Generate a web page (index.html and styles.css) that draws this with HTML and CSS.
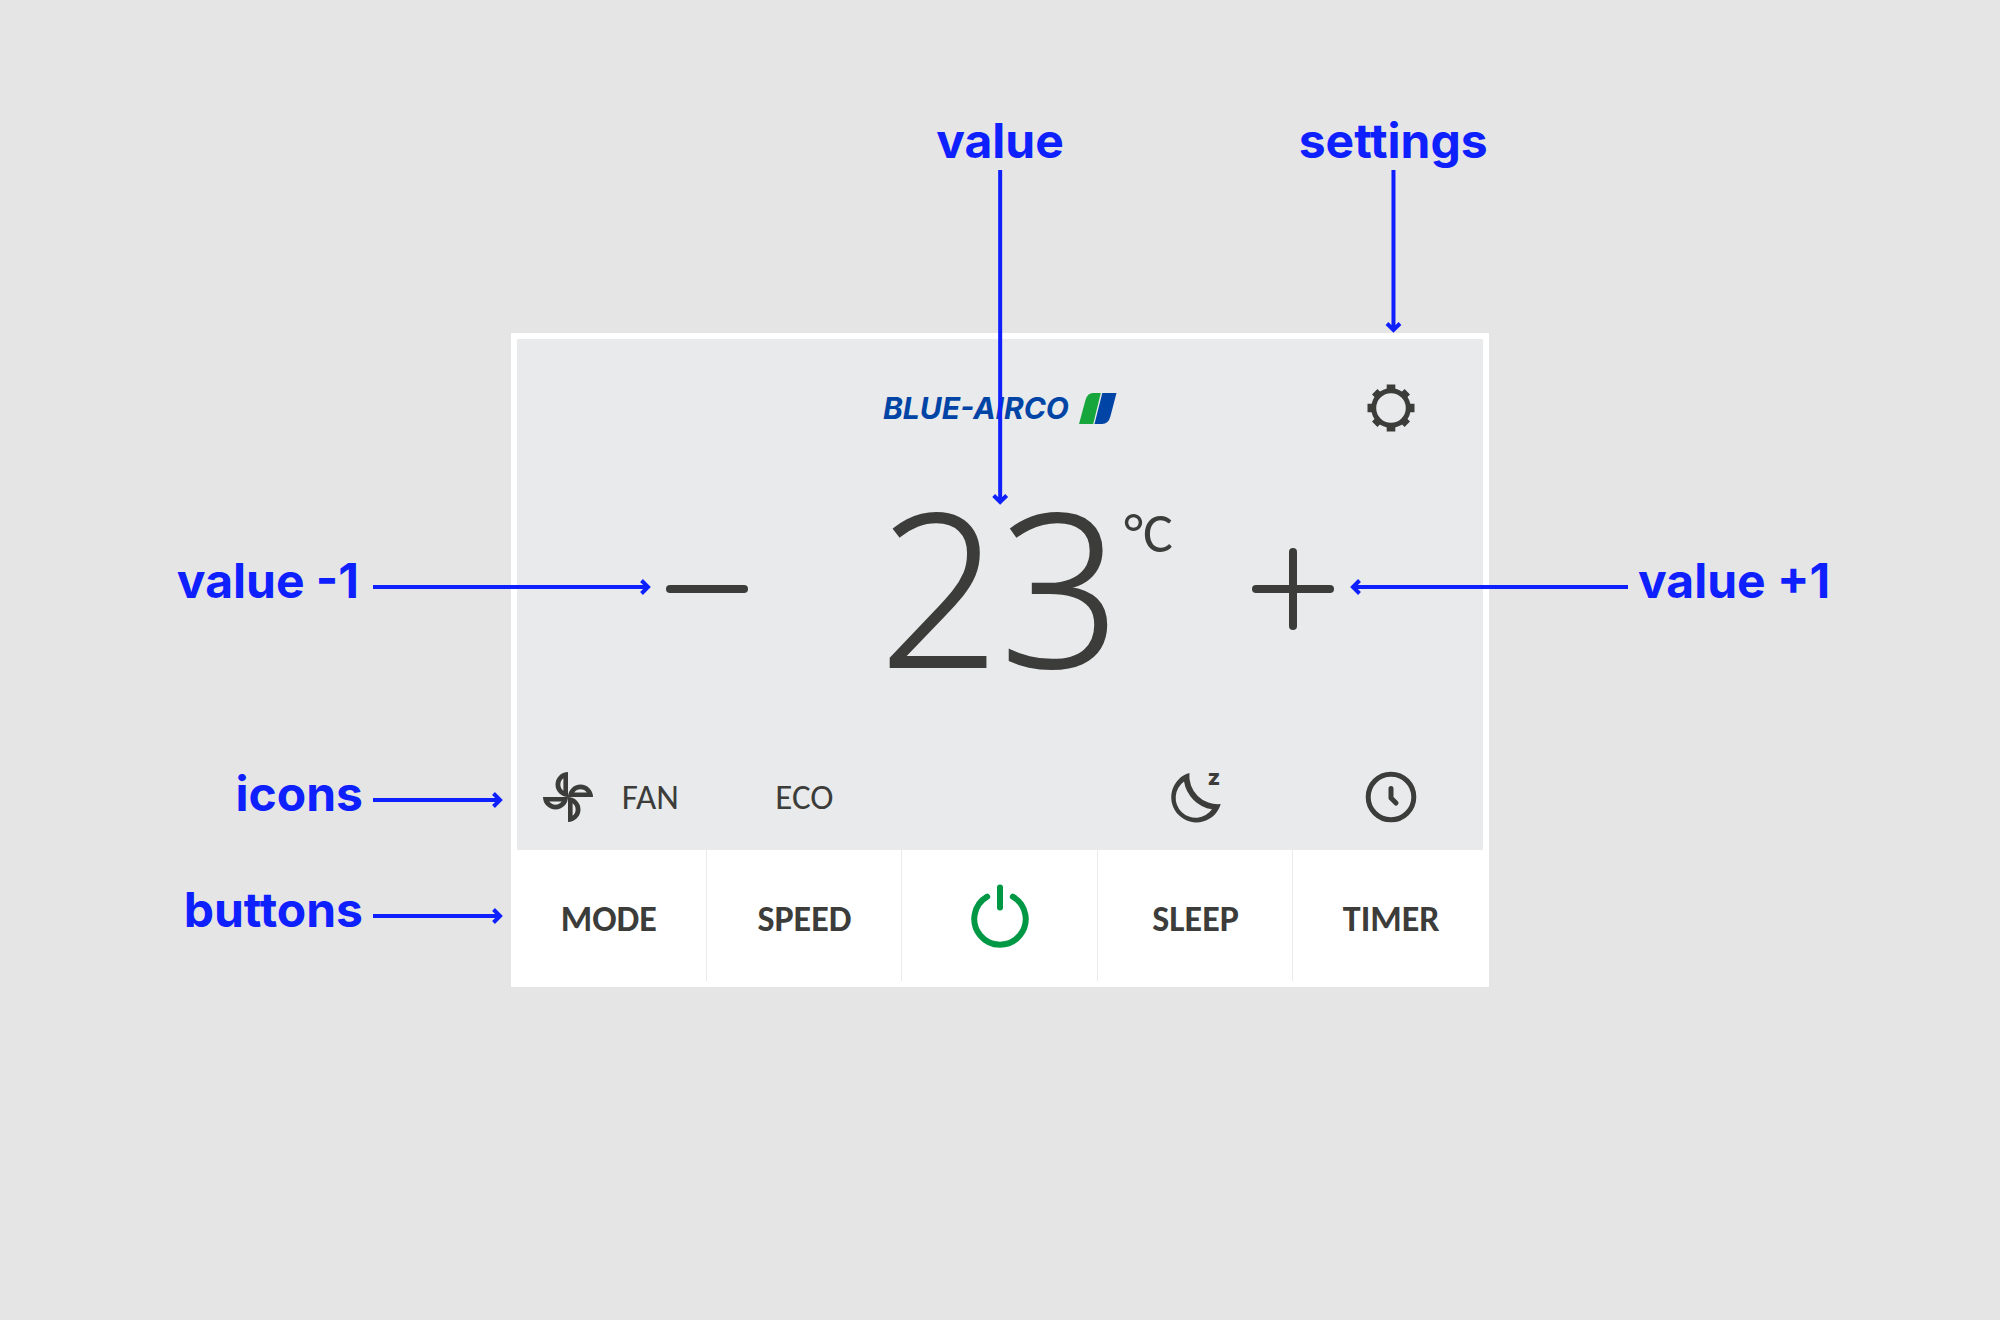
FILE: index.html
```html
<!DOCTYPE html>
<html lang="en">
<head>
<meta charset="UTF-8" />
<meta name="viewport" content="width=device-width, initial-scale=1" />
<title>Blue-Airco Thermostat</title>
<link rel="stylesheet" href="styles.css">
</head>
<body>
  <main class="stage">
    <section class="panel" aria-label="Air conditioner control">
      <div class="screen">
        <header class="top-row">
          <div class="logo">
            <span class="logo-text">BLUE-AIRCO</span>
            <svg class="logo-mark" width="38" height="31" viewBox="0 0 38 31" aria-hidden="true">
              <path fill="#16a63c" d="M0 31L6.5 7Q8.5 0 14 0H21.8L14.2 31Z"/>
              <path fill="#0044a6" d="M23.3 0H37.5L31.5 23Q29.5 31 23 31H15.5Z"/>
            </svg>
          </div>
          <button class="icon-btn settings-btn" aria-label="Settings">
            <svg width="52" height="52" viewBox="-26 -26 52 52" fill="none" stroke="currentColor" aria-hidden="true">
              <circle r="17.3" stroke-width="5"/>
              <path stroke-width="8.6" d="M0 -18V-23.5M0 18V23.5M-18 0H-23.5M18 0H23.5"/>
              <path stroke-width="7.6" d="M-12.5 -12.5L-16.3 -16.3M12.5 -12.5L16.3 -16.3M-12.5 12.5L-16.3 16.3M12.5 12.5L16.3 16.3"/>
            </svg>
          </button>
        </header>

        <div class="value-row">
          <div class="side">
            <button class="icon-btn" aria-label="Decrease temperature">
              <svg width="84" height="84" viewBox="0 0 84 84" fill="currentColor" aria-hidden="true">
                <rect x="1" y="38" width="82" height="8" rx="4"/>
              </svg>
            </button>
          </div>
          <output class="value">23</output>
          <div class="side">
            <span class="unit">°C</span>
            <button class="icon-btn" aria-label="Increase temperature">
              <svg width="84" height="84" viewBox="0 0 84 84" fill="currentColor" aria-hidden="true">
                <rect x="1" y="38" width="82" height="8" rx="4"/>
                <rect x="38" y="1" width="8" height="82" rx="4"/>
              </svg>
            </button>
          </div>
        </div>

        <div class="status-row">
          <div class="status status-fan">
            <svg width="52" height="52" viewBox="-26 -26 52 52" fill="currentColor" fill-rule="evenodd" aria-hidden="true">
              <path d="M0 0A12.5 12.5 0 0 1 0 -25ZM-4.6 -6.2A8 8 0 0 1 -4.6 -18.8Z"/>
              <path transform="rotate(90)" d="M0 0A12.5 12.5 0 0 1 0 -25ZM-4.6 -6.2A8 8 0 0 1 -4.6 -18.8Z"/>
              <path transform="rotate(180)" d="M0 0A12.5 12.5 0 0 1 0 -25ZM-4.6 -6.2A8 8 0 0 1 -4.6 -18.8Z"/>
              <path transform="rotate(270)" d="M0 0A12.5 12.5 0 0 1 0 -25ZM-4.6 -6.2A8 8 0 0 1 -4.6 -18.8Z"/>
            </svg>
            <span>FAN</span>
          </div>
          <div class="status">ECO</div>
          <div class="status"></div>
          <div class="status">
            <svg width="52" height="52" viewBox="-26 -26 52 52" fill="currentColor" fill-rule="evenodd" aria-hidden="true">
              <path d="M-6.6 -24A25.2 25.2 0 1 0 24.7 7A28.5 28.5 0 0 1 -6.6 -24ZM-12 -15.5A20 20 0 1 0 16 12.3A34 34 0 0 1 -12 -15.5Z"/>
              <text class="sleep-z" x="18" y="-12" text-anchor="middle">z</text>
            </svg>
          </div>
          <div class="status">
            <svg width="52" height="52" viewBox="-26 -26 52 52" fill="none" stroke="currentColor" stroke-width="5" aria-hidden="true">
              <circle r="22.8"/>
              <path stroke-linecap="round" stroke-linejoin="round" d="M0 -8.5V1L5 6"/>
            </svg>
          </div>
        </div>
      </div>

      <div class="buttons">
        <button class="mode-btn">MODE</button>
        <button class="mode-btn">SPEED</button>
        <button class="mode-btn power-btn" aria-label="Power">
          <svg width="64" height="64" viewBox="-32 -32 64 64" fill="none" stroke="currentColor" stroke-width="6" stroke-linecap="round" aria-hidden="true">
            <path d="M-12.8 -22.3A25.7 25.7 0 1 0 12.8 -22.3M0 -31.5V-11.5"/>
          </svg>
        </button>
        <button class="mode-btn">SLEEP</button>
        <button class="mode-btn">TIMER</button>
      </div>

      <!-- Callouts -->
      <div class="callout callout-top callout-value">
        <span>value</span>
        <svg width="18" height="335" viewBox="0 0 18 335" aria-hidden="true"><path d="M9 0V331M2.5 325.5L9 332L15.5 325.5"/></svg>
      </div>
      <div class="callout callout-top callout-settings">
        <span>settings</span>
        <svg width="18" height="163" viewBox="0 0 18 163" aria-hidden="true"><path d="M9 0V159M2.5 153.5L9 160L15.5 153.5"/></svg>
      </div>
      <div class="callout callout-minus">
        <span>value -1</span>
        <svg width="278" height="18" viewBox="0 0 278 18" aria-hidden="true"><path d="M0 9H274M268.5 2.5L275 9L268.5 15.5"/></svg>
      </div>
      <div class="callout callout-plus">
        <svg width="278" height="18" viewBox="0 0 278 18" aria-hidden="true"><path d="M278 9H4M9.5 2.5L3 9L9.5 15.5"/></svg>
        <span>value +1</span>
      </div>
      <div class="callout callout-icons">
        <span>icons</span>
        <svg width="130" height="18" viewBox="0 0 130 18" aria-hidden="true"><path d="M0 9H126M120.5 2.5L127 9L120.5 15.5"/></svg>
      </div>
      <div class="callout callout-buttons">
        <span>buttons</span>
        <svg width="130" height="18" viewBox="0 0 130 18" aria-hidden="true"><path d="M0 9H126M120.5 2.5L127 9L120.5 15.5"/></svg>
      </div>
    </section>
  </main>
</body>
</html>
```
FILE: styles.css
```css
/* Reset */
* {
  box-sizing: border-box;
}
body {
  margin: 0;
  background: #e5e5e5;
  color: #3c3c3a;
  font-family: Carlito, Lato, sans-serif;
}
button {
  margin: 0;
  padding: 0;
  border: none;
  background: transparent;
  color: inherit;
  font: inherit;
  cursor: pointer;
}
svg {
  display: block;
  flex: none;
  overflow: visible;
}
.stage {
  display: flex;
  justify-content: center;
  align-items: center;
  min-height: 100vh;
}

/* Control panel */
.panel {
  position: relative;
  width: 100%;
  max-width: 978px;
  padding: 6px 0;
  background: #fff;
}
.screen {
  margin: 0 6px;
  background: #e8eaec;
}
.top-row {
  display: grid;
  grid-template-columns: repeat(5, 1fr);
  align-items: center;
  height: 138px;
  margin: 0 -6px;
}
.logo {
  grid-column: 2 / 5;
  display: flex;
  justify-content: center;
  align-items: center;
  gap: 10px;
}
.logo-text {
  color: #0044a6;
  font-family: Inter, sans-serif;
  font-size: 30px;
  font-style: italic;
  font-weight: 700;
  line-height: 32px;
}
.settings-btn {
  justify-self: center;
}

/* Temperature */
.value-row {
  display: grid;
  grid-template-columns: 1fr auto 1fr;
  height: 224px;
  padding: 0 148px;
}
.side {
  display: flex;
  justify-content: space-between;
  align-items: center;
}
.value {
  font-family: "Open Sans", sans-serif;
  font-size: 212px;
  font-weight: 300;
  line-height: 216px;
  -webkit-text-stroke: 2px currentColor;
}
.unit {
  align-self: flex-start;
  margin-top: 24px;
  padding-left: 3px;
  font-size: 56px;
  line-height: 64px;
}

/* Status icons */
.status-row {
  display: grid;
  grid-template-columns: repeat(5, 1fr);
  height: 106px;
  margin: 43px -6px 0;
  font-size: 35px;
  line-height: 40px;
}
.status {
  display: flex;
  justify-content: center;
  align-items: center;
}
.status-fan {
  gap: 28px;
  padding-left: 3px;
}
.sleep-z {
  font-family: Inter, sans-serif;
  font-size: 22px;
  font-weight: 800;
}

/* Bottom buttons */
.buttons {
  display: grid;
  grid-template-columns: repeat(5, 1fr);
}
.mode-btn {
  display: flex;
  justify-content: center;
  align-items: center;
  height: 131px;
  padding-top: 6px;
  font-size: 36px;
  font-weight: 700;
}
.mode-btn + .mode-btn {
  box-shadow: -1px 0 0 #e8eaec;
}
.power-btn {
  color: #009845;
}

/* Callouts */
.callout {
  position: absolute;
  display: flex;
  align-items: center;
  gap: 10px;
  color: #0f20ff;
  font-family: Inter, sans-serif;
  font-size: 48px;
  font-weight: 700;
  line-height: 56px;
  white-space: nowrap;
  pointer-events: none;
}
.callout path {
  fill: none;
  stroke: currentColor;
  stroke-width: 4;
}
.callout svg {
  margin-top: 12px;
}
.callout-top {
  flex-direction: column;
  gap: 1px;
  top: -220px;
  transform: translateX(-50%);
}
.callout-top svg {
  margin-top: 0;
}
.callout-value {
  left: 50%;
}
.callout-settings {
  left: calc(90% + 2px);
}
.callout-minus,
.callout-plus {
  top: 220px;
}
.callout-minus {
  right: calc(100% - 140px);
  gap: 14px;
}
.callout-plus {
  left: calc(100% - 139px);
}
.callout-icons,
.callout-buttons {
  right: calc(100% + 8px);
}
.callout-icons {
  top: 433px;
}
.callout-buttons {
  top: 549px;
}

@media (max-width: 1640px) {
  .callout {
    display: none;
  }
}
```
